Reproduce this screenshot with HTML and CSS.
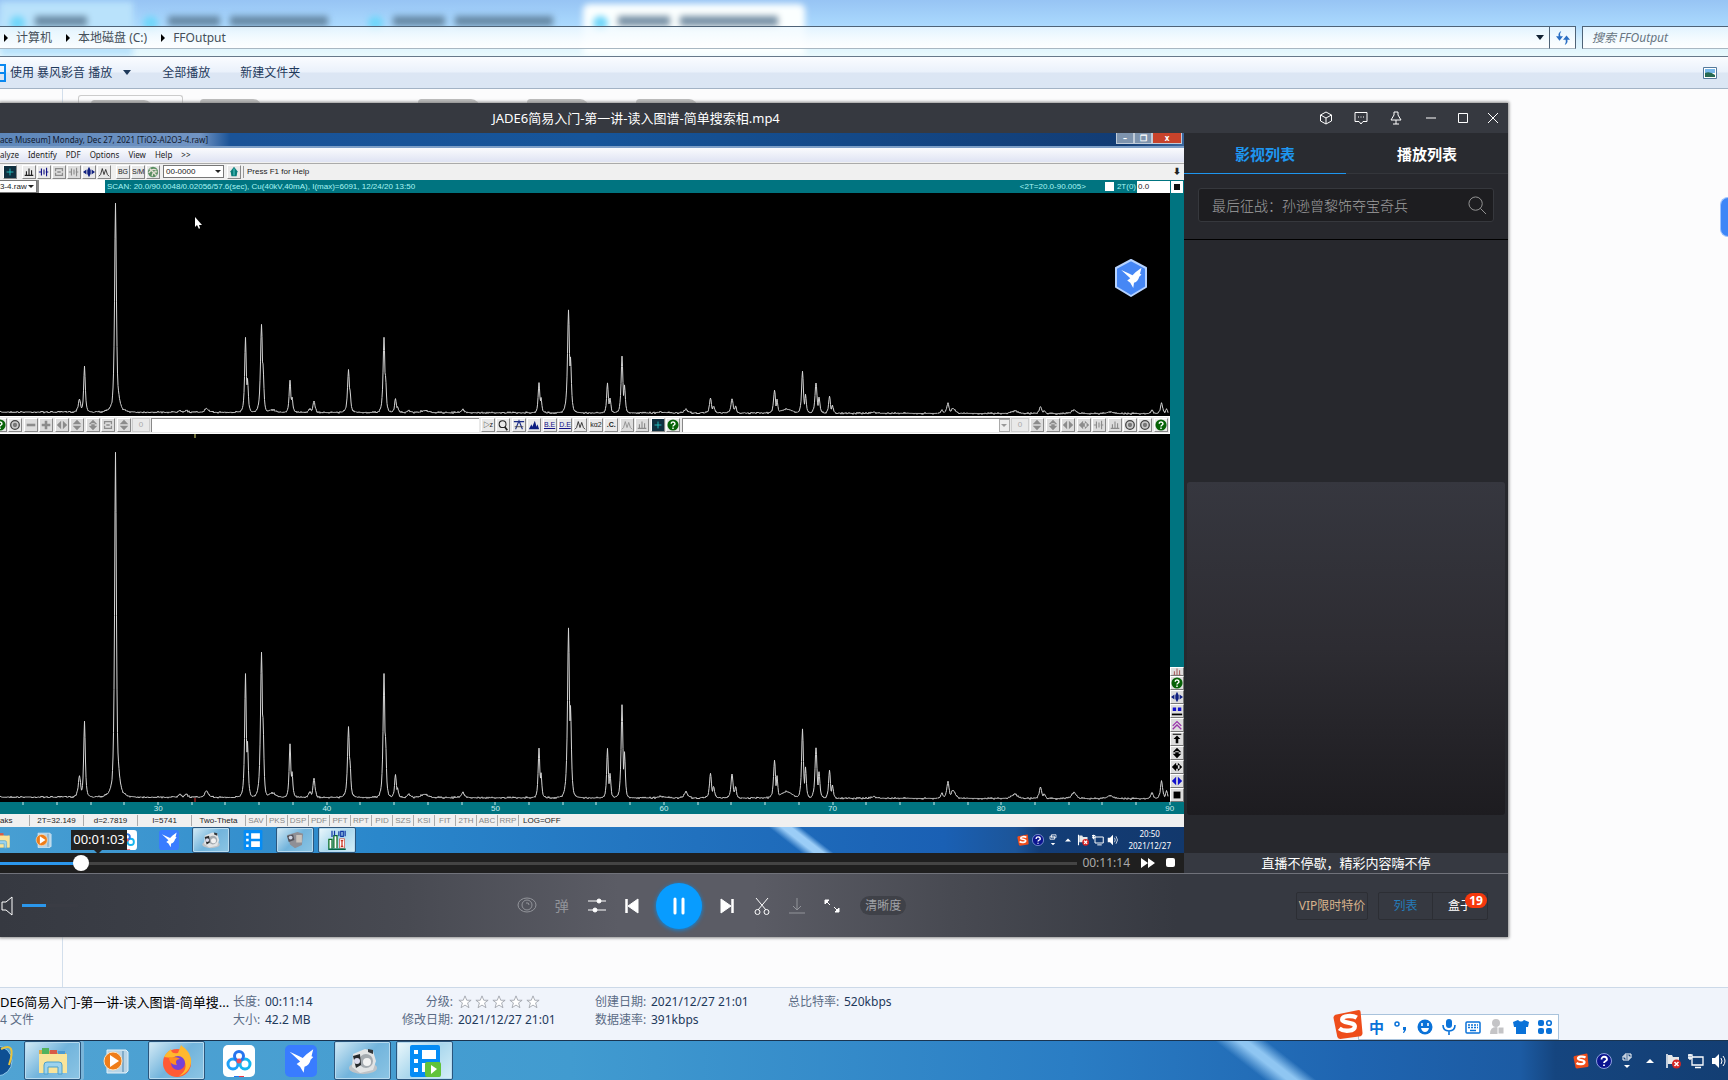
FILE: index.html
```html
<!DOCTYPE html>
<html lang="zh-CN">
<head>
<meta charset="utf-8">
<title>JADE6简易入门-第一讲-读入图谱-简单搜索相.mp4</title>
<link rel="stylesheet" href="styles.css">
</head>
<body>
<svg class="defs" aria-hidden="true">
  <symbol id="i-bird" viewBox="0 0 32 32"><path fill="#fff" d="M3 6l11 5 4 2 4-4 8-6-2 8 2 1-3 3c-1 4-3 7-7 8l-1 7-4-7-4-3 4-3z"/></symbol>
  <symbol id="i-help" viewBox="0 0 14 14"><circle cx="7" cy="7" r="6.500" fill="#076307"/><path d="M5 5.500c0-3 4.300-2.600 4.300 0C9.300 7 7 7 7 8.700M7 10v1.600" stroke="#fff" stroke-width="1.700" fill="none"/></symbol>
  <symbol id="i-bars" viewBox="0 0 14 14"><path d="M2 11h10M4 11V6M7 11V3M10 11V5" stroke="currentColor" stroke-width="1.300" fill="none"/></symbol>
  <symbol id="i-wave" viewBox="0 0 14 14"><path d="M1 12l2-2 2-7 2 7 2-6 2 6 2 2" stroke="currentColor" fill="none"/></symbol>
  <symbol id="i-link" viewBox="0 0 14 14"><path d="M1 7h3V3M4 7v4M7 7V4m0 3v3M9 7h3M10 2v10" stroke="currentColor" stroke-width="1.300" fill="none"/></symbol>
  <symbol id="i-minus" viewBox="0 0 14 14"><path d="M2 7h10" stroke="currentColor" stroke-width="3"/></symbol>
  <symbol id="i-plus" viewBox="0 0 14 14"><path d="M2 7h10M7 2v10" stroke="currentColor" stroke-width="3"/></symbol>
  <symbol id="i-lr" viewBox="0 0 14 14"><path d="M6 2v10L1 7zM8 2v10l5-5z" fill="currentColor"/></symbol>
  <symbol id="i-lrj" viewBox="0 0 14 14"><path d="M6 2v10L1 7zM8 2v10l5-5zM4 5h6v4H4z" fill="currentColor"/></symbol>
  <symbol id="i-ud" viewBox="0 0 14 14"><path d="M2 6h10L7 1zM2 8h10l-5 5z" fill="currentColor"/></symbol>
  <symbol id="i-udj" viewBox="0 0 14 14"><path d="M2 6h10L7 1zM2 8h10l-5 5zM5 5h4v5H5z" fill="currentColor"/></symbol>
  <symbol id="i-cycle" viewBox="0 0 14 14"><path d="M3 6V3h8v3M11 8v3H3V8M5 7h4" stroke="currentColor" stroke-width="1.500" fill="none"/></symbol>
  <symbol id="i-ring" viewBox="0 0 14 14"><circle cx="7" cy="7" r="5" fill="#ccc" stroke="#444" stroke-width="1.500"/><circle cx="7" cy="7" r="2.500" fill="#777"/></symbol>
  <symbol id="i-cross" viewBox="0 0 14 14"><path d="M7 1l2 4v4l-2 4-2-4V5zM0 7l4-3v6zM14 7l-4-3v6z" fill="#102080"/></symbol>
  <symbol id="i-screen" viewBox="0 0 14 14"><path fill="#103040" d="M0 0h14v14H0z"/><path d="M3 7h8M7 3v8" stroke="#2cc" fill="none"/></symbol>
  <symbol id="i-globe" viewBox="0 0 14 14"><circle cx="7" cy="7" r="6" fill="#5b8f62"/><path d="M3 3l8 8M2 8c3-4 6-5 9-3M6 12c0-4 3-6 6-5" stroke="#e5e0d5" fill="none" stroke-width="1.500"/></symbol>
  <symbol id="i-drop" viewBox="0 0 14 14"><path d="M7 1l4 5-1 6H4L3 6z" fill="#087b78"/><path d="M7 3v8" stroke="#6dd"/></symbol>
  <symbol id="i-peak" viewBox="0 0 14 14"><path d="M1 12l3-6 1 3 3-7 2 7 1-3 2 6z" fill="#0a1c80"/></symbol>
  <symbol id="i-fit" viewBox="0 0 14 14"><path d="M1 3h12M3 12L7 2l4 10" stroke="#1b2c88" fill="none" stroke-width="1.300"/><path d="M2 9h10" stroke="#444"/></symbol>
  <symbol id="i-lens" viewBox="0 0 14 14"><circle cx="6.500" cy="6" r="4" fill="none" stroke="#222" stroke-width="1.200"/><path d="M9 9l3 4" stroke="#222" stroke-width="2"/></symbol>
  <symbol id="i-sogou" viewBox="0 0 32 32"><path d="M3 6l24-5q2 0 2 2l2 22q0 2-2 3L8 31q-2 0-3-2L1 9q0-2 2-3z" fill="#ee4d1b"/><path d="M25 9c-5-3-15-2-15 2s13 2 13 7-11 6-16 2" stroke="#fff" stroke-width="4.500" fill="none"/></symbol>
  <symbol id="i-folder" viewBox="0 0 32 32"><path d="M2 5h10l2 3h15v20H2z" fill="#dca94b"/><path d="M5 3h7v6H5z" fill="#51b35d"/><path d="M13 5h7v4h-7z" fill="#d75a47"/><path d="M21 6h7v4h-7z" fill="#4c9ad1"/><path d="M2 9h28v19H2z" fill="#f9e49a"/><path d="M7 29v-9q0-3 3-3h12q3 0 3 3v9h-4v-7H11v7z" fill="#9bd2ee" stroke="#4ba0cc"/></symbol>
  <symbol id="i-wmp" viewBox="0 0 32 32"><path d="M8 5h19l2 2v19l-2 2H8z" fill="#b8d4e6" stroke="#e2f1fa"/><path d="M24 6v21" stroke="#4a83ac"/><circle cx="14" cy="16" r="9" fill="#ef7d19" stroke="#ffe2ba"/><path d="M11 10l9 6-9 6z" fill="#fff"/></symbol>
  <symbol id="i-firefox" viewBox="0 0 32 32"><circle cx="16" cy="18" r="14" fill="#ff5a35"/><path d="M3 12c2-4 5-6 7-8 0 4 3 5 7 4l3-8c4 4 8 5 10 14 1 6-3 15-12 17 7-4 8-11 5-16-3-4-9-4-12-2z" fill="#ffb82e"/><circle cx="17" cy="18" r="7" fill="#7542d8"/><path d="M8 12c4 1 7-1 11 2-4 0-5 3-3 6-5 0-8-3-8-8z" fill="#ff8f20"/></symbol>
  <symbol id="i-cloud" viewBox="0 0 32 32"><rect width="32" height="32" rx="5" fill="#fff"/><g fill="none" stroke-width="3"><circle cx="10" cy="19" r="5" stroke="#20a0f8"/><circle cx="22" cy="19" r="5" stroke="#17b5ee"/><circle cx="16" cy="11" r="4.500" stroke="#2775ee"/></g><circle cx="16" cy="16" r="2.500" fill="#f04d5a"/><path d="M11 31h5v1h-5z" fill="#27e"/><path d="M16 31h5v1h-5z" fill="#e34"/></symbol>
  <symbol id="i-birdbox" viewBox="0 0 32 32"><rect width="32" height="32" rx="5" fill="#397cff"/><use href="#i-bird" x="2" y="1" width="28" height="29"/></symbol>
  <symbol id="i-camera" viewBox="0 0 32 32"><ellipse cx="16" cy="23" rx="14" ry="6" fill="#bfc3c7"/><path d="M6 9l12-5 8 2 3 10-3 9-13 3-8-6z" fill="#e2e4e5"/><circle cx="19" cy="16" r="7" fill="#a5abb0"/><circle cx="20" cy="17" r="4" fill="#f2f2f2"/><path d="M6 11l7-2 1 11-5 3z" fill="#26292c"/><circle cx="10" cy="16" r="3" fill="#dde"/><path d="M21 4l5 1v4l-5-2z" fill="#33373b"/></symbol>
  <symbol id="i-list" viewBox="0 0 32 32"><rect x="1" width="30" height="32" rx="2" fill="#058cf5"/><path fill="#fff" d="M5 5h4v4H5zM5 14h4v4H5zM5 23h4v4H5zM13 5h14v9H13zM13 18h14v9H13z"/></symbol>
  <symbol id="i-listplay" viewBox="0 0 32 32"><use href="#i-list"/><rect x="16" y="17" width="16" height="15" rx="2" fill="#61c33a"/><path d="M22 20l6 4-6 5z" fill="#fff"/></symbol>
  <symbol id="i-camcorder" viewBox="0 0 32 32"><path d="M4 8l16-5 9 3-2 18-11 5-8-6z" fill="#8f8f95"/><path d="M3 9l10-2 2 9-9 3z" fill="#54545c"/><path d="M18 8h9v12h-9z" fill="#c9c2bb"/><circle cx="9" cy="12" r="3" fill="#ccd4e5"/></symbol>
  <symbol id="i-jade" viewBox="0 0 32 32"><path d="M3 30V15h5v15M11 29V9h5v20" stroke="#076b20" stroke-width="2" fill="#fff"/><path d="M8 1v10M12 1v8M19 2v8M22 2h4v8h-4zM29 1v9" stroke="#123aa4" stroke-width="2" fill="none"/><path d="M20 14h8v15h-8z" fill="#fff" stroke="#c32"/><path d="M22 17h4M24 17v9M22 26h4" stroke="#c32" stroke-width="2"/><path d="M2 31h28" stroke="#064" stroke-width="3"/></symbol>
  <symbol id="i-q" viewBox="0 0 16 16"><circle cx="8" cy="8" r="7.500" fill="#0b1590" stroke="#8fa1dd"/><path d="M5.500 6.500c0-4 5.500-3.300 5.500 0C11 8 8 8 8 10M8 11.500v1.500" stroke="#fff" stroke-width="1.800" fill="none"/></symbol>
  <symbol id="i-restore" viewBox="0 0 16 16"><path d="M6 1h6v4H6zM4 3h6v4H4z" stroke="#fff" fill="none"/><path d="M5 12h6l-3 3z" fill="#fff"/></symbol>
  <symbol id="i-up" viewBox="0 0 16 16"><path d="M4 10h8L8 6z" fill="#fff"/></symbol>
  <symbol id="i-flag" viewBox="0 0 16 16"><path d="M2 1v14" stroke="#fff" stroke-width="1.500"/><path d="M3 2h4l1 2h6v7H3z" fill="#e8e8e8"/><circle cx="11.500" cy="11" r="4.500" fill="#d32525"/><path d="M9.500 9l4 4M13.500 9l-4 4" stroke="#fff" stroke-width="1.500"/></symbol>
  <symbol id="i-net" viewBox="0 0 16 16"><path d="M4 4h11v8H4zM7 14.500h6M2 1v6M0 2h4v3H0z" stroke="#fff" stroke-width="1.300" fill="none"/></symbol>
  <symbol id="i-sound" viewBox="0 0 16 16"><path d="M1 5h3l4-4v14l-4-4H1z" fill="#fff"/><path d="M10 5q2 3 0 6M12 3q4 5 0 10" stroke="#fff" fill="none"/></symbol>
  <symbol id="i-star" viewBox="0 0 16 16"><path d="M8 1l2 5h5l-4 3 1.500 5.500L8 11.500l-4.500 3L5 9 1 6h5z" fill="#fff" stroke="#9fa4ac"/></symbol>
</svg>

<div class="desktop">
  <header class="glass">
    <div class="ghost-tabs" aria-hidden="true">
      <div class="ghost first"><b></b><i></i></div>
      <div class="ghost"><b></b><i></i><i class="long"></i></div>
      <div class="ghost"><b></b><i></i><i class="long"></i></div>
      <div class="ghost on"><b></b><i></i><i class="long"></i></div>
    </div>
    <div class="address-row">
      <nav class="address">
        <span class="tri"></span><a href="#">计算机</a>
        <span class="tri"></span><a href="#">本地磁盘 (C:)</a>
        <span class="tri"></span><a href="#">FFOutput</a>
        <span class="caret"></span>
      </nav>
      <button class="refresh" aria-label="刷新"><svg viewBox="0 0 16 16"><path d="M6 0Q2 2 3 6H0l4 5 4-5H5Q4 3 6 0zM10 16q4-2 3-6h3l-4-5-4 5h3q1 3-1 6z" fill="#2a6fc4"/></svg></button>
      <input class="finder" type="text" placeholder="搜索 FFOutput" aria-label="搜索 FFOutput">
    </div>
  </header>

  <div class="commands">
    <button class="play-with"><svg viewBox="0 0 6 18"><path d="M-8 1H5v16H-8M-8 9H5" stroke="#0a88f0" stroke-width="2" fill="none"/></svg>使用 暴风影音 播放<span class="caret"></span></button>
    <button>全部播放</button>
    <button>新建文件夹</button>
    <svg class="view-icon" viewBox="0 0 14 12"><path d="M.5.500h13v11H.5z" fill="#fff" stroke="#557a9c"/><path d="M2 2h10v4H2z" fill="#78b8ea"/><path d="M2 6q5-2 10 2v2H2z" fill="#276a52"/></svg>
  </div>

  <main class="files">
    <div class="tree"></div>
    <div class="thumbs"><span class="pick"><i></i></span><i></i><i class="far"></i><i></i><i class="near"></i></div>

    <section class="player">
      <div class="titlebar">
        <h1>JADE6简易入门-第一讲-读入图谱-简单搜索相.mp4</h1>
        <div class="winbtns">
          <button aria-label="皮肤"><svg viewBox="0 0 14 14"><path d="M7 1l5.500 3v6L7 13 1.500 10V4zM1.500 4L7 7l5.500-3M7 7v6" /></svg></button>
          <button aria-label="反馈"><svg viewBox="0 0 14 14"><path d="M1 1.500h12v9H9L7 13l-2-2.500H1zM4 6h1M6.500 6h1M9 6h1"/></svg></button>
          <button aria-label="置顶"><svg viewBox="0 0 14 14"><path d="M5 1h4v3l3 5H2l3-5zM7 9v4M4 13h6"/></svg></button>
          <button aria-label="最小化"><svg viewBox="0 0 14 14"><path d="M2 7h10"/></svg></button>
          <button class="slim" aria-label="最大化"><svg viewBox="0 0 14 14"><path d="M2.500 2.500h9v9h-9z"/></svg></button>
          <button class="slim" aria-label="关闭"><svg viewBox="0 0 14 14"><path d="M2 2l10 10M12 2L2 12"/></svg></button>
        </div>
      </div>

      <div class="stage">
        <div class="screen">
          <div class="jade-title"><span>ace Museum] Monday, Dec 27, 2021 [TiO2-Al2O3-4.raw]</span><div class="jade-win"><b>–</b><b>❐</b><b class="x">x</b></div></div>
          <div class="jade-menu"><span>alyze</span><span>Identify</span><span>PDF</span><span>Options</span><span>View</span><span>Help</span><span>&gt;&gt;</span></div>
          <div class="jade-tools">
            <svg class="t"><use href="#i-screen"/></svg>
            <svg class="t gap"><use href="#i-bars"/></svg><svg class="t navy"><use href="#i-link"/></svg><svg class="t dim"><use href="#i-cycle"/></svg><svg class="t dim"><use href="#i-link"/></svg><svg class="t"><use href="#i-cross"/></svg><svg class="t"><use href="#i-wave"/></svg>
            <span class="t txt gap">BG</span><span class="t txt">S/M</span><svg class="t"><use href="#i-globe"/></svg>
            <span class="code">00-0000<span class="caret"></span></span>
            <svg class="t"><use href="#i-drop"/></svg>
            <span class="tip">Press F1 for Help</span><span class="pin">⬇</span>
          </div>
          <div class="jade-scan">
            <span class="raw">3-4.raw<span class="caret"></span></span><span class="blank"></span>
            <span class="info">SCAN: 20.0/90.0048/0.02056/57.6(sec), Cu(40kV,40mA), I(max)=6091, 12/24/20 13:50</span>
            <span>&lt;2T=20.0-90.005&gt;</span><label><input type="checkbox">2T(0)</label><span class="zero">0.0</span><span class="stop"></span>
          </div>
          <div class="jade-body">
            <div class="plots">
              <svg class="plot top" viewBox="0 0 1170 223" preserveAspectRatio="none"><path class="trace" data-base="219" data-scale="1"/></svg>
              <div class="jade-mid">
                <svg class="t"><use href="#i-help"/></svg><svg class="t"><use href="#i-ring"/></svg><svg class="t dim"><use href="#i-minus"/></svg><svg class="t dim"><use href="#i-plus"/></svg><svg class="t dim"><use href="#i-lr"/></svg><svg class="t dim"><use href="#i-ud"/></svg><svg class="t dim"><use href="#i-udj"/></svg><svg class="t dim"><use href="#i-cycle"/></svg><svg class="t dim"><use href="#i-ud"/></svg><span class="num">0</span>
                <span class="field"></span>
                <span class="t txt">▷z</span><svg class="t"><use href="#i-lens"/></svg><svg class="t"><use href="#i-fit"/></svg><svg class="t"><use href="#i-peak"/></svg><span class="t txt u">B.E</span><span class="t txt u">D.E</span><svg class="t"><use href="#i-wave"/></svg><span class="t txt">kα2</span><span class="t txt strong">.C.</span><svg class="t dim"><use href="#i-wave"/></svg><svg class="t dim"><use href="#i-bars"/></svg><svg class="t"><use href="#i-screen"/></svg><svg class="t"><use href="#i-help"/></svg>
                <span class="field"><span class="drop"><span class="caret"></span></span></span>
                <span class="num">0</span><svg class="t dim"><use href="#i-ud"/></svg><svg class="t dim"><use href="#i-udj"/></svg><svg class="t dim"><use href="#i-lr"/></svg><svg class="t dim"><use href="#i-lrj"/></svg><svg class="t dim"><use href="#i-link"/></svg><svg class="t dim"><use href="#i-bars"/></svg><svg class="t"><use href="#i-ring"/></svg><svg class="t"><use href="#i-ring"/></svg><svg class="t"><use href="#i-help"/></svg>
              </div>
              <svg class="plot low" viewBox="0 0 1170 368" preserveAspectRatio="none"><path class="trace" data-base="363" data-scale="1.65"/><path d="M195 0v4" stroke="#dede70"/><path d="M195 364v4" stroke="#d33"/></svg>
            </div>
            <div class="rail">
              <span class="rt half"><svg><use href="#i-bars"/></svg></span><span class="rt"><svg><use href="#i-help"/></svg></span><span class="rt"><svg><use href="#i-cross"/></svg></span><span class="rt"><svg viewBox="0 0 14 14"><path d="M2 3h4v4H2zM8 3h4v4H8z" fill="#11c"/><path d="M1 10h12v2H1z"/></svg></span><span class="rt violet"><svg viewBox="0 0 14 14"><path d="M2 8l5-5 5 5M2 12l5-5 5 5" stroke="currentColor" stroke-width="1.500" fill="none"/></svg></span><span class="rt"><svg viewBox="0 0 14 14"><path d="M2 1h10v1H2zM7 3l4 4H8.500v5h-3V7H3z"/></svg></span><span class="rt"><svg><use href="#i-udj"/></svg></span><span class="rt"><svg><use href="#i-lrj"/></svg></span><span class="rt blue"><svg><use href="#i-lr"/></svg></span><span class="rt"><svg viewBox="0 0 14 14"><path d="M3 3h8v8H3z"/></svg></span>
            </div>
          </div>
          <div class="axis">
            <svg class="ticks" viewBox="0 0 1184 3" preserveAspectRatio="none"><path/></svg>
            <div class="marks"><span>30</span><span>40</span><span>50</span><span>60</span><span>70</span><span>80</span><span>90</span></div>
          </div>
          <div class="jade-status">
            <span class="w30">aks</span><span class="w54">2T=32.149</span><span class="w54">d=2.7819</span><span class="w54">I=5741</span><span class="w54">Two-Theta</span><em>SAV</em><em>PKS</em><em>DSP</em><em>PDF</em><em>PFT</em><em>RPT</em><em>PID</em><em>SZS</em><em>KSI</em><em>FIT</em><em>2TH</em><em>ABC</em><em>RRP</em><span>LOG=OFF</span>
          </div>
          <div class="mini-task">
            <span class="slot"><svg><use href="#i-folder"/></svg></span><span class="slot"><svg><use href="#i-wmp"/></svg></span><span class="slot"><svg><use href="#i-firefox"/></svg></span><span class="slot"><svg><use href="#i-cloud"/></svg></span><span class="slot"><svg><use href="#i-birdbox"/></svg></span><span class="slot open"><svg><use href="#i-camera"/></svg></span><span class="slot"><svg><use href="#i-list"/></svg></span><span class="slot open"><svg><use href="#i-camcorder"/></svg></span><span class="slot open now"><svg><use href="#i-jade"/></svg></span>
            <div class="mini-tray"><svg><use href="#i-sogou"/></svg><svg><use href="#i-q"/></svg><svg><use href="#i-restore"/></svg><svg><use href="#i-up"/></svg><svg><use href="#i-flag"/></svg><svg><use href="#i-net"/></svg><svg><use href="#i-sound"/></svg><span class="clock">20:50<br>2021/12/27</span></div>
          </div>

          <svg class="cursor" viewBox="0 0 9 14"><path d="M1 1v10l2-2 2 4 1-1-1-3h3z" fill="#fff"/></svg>
          <svg class="hexbird" viewBox="0 0 34 38"><path d="M17 1l15 8v19l-15 9-15-9V9z" fill="#4687f5" stroke="#b5d2ff" stroke-width="2" stroke-linejoin="round"/><use href="#i-bird" x="5" y="6" width="24" height="25"/></svg>
          <div class="time-tip">00:01:03</div>
        </div>

        <div class="seekbar">
          <input class="seek" type="range" min="0" max="1000" value="69" aria-label="播放进度">
          <span class="total">00:11:14</span>
          <button aria-label="快进"><svg viewBox="0 0 14 12"><path d="M0 1l7 5-7 5zM7 1l7 5-7 5z"/></svg></button>
          <button aria-label="停止"><svg viewBox="0 0 14 12"><rect x="2" y="1" width="9" height="9" rx="2"/></svg></button>
        </div>
      </div>

      <aside class="side">
        <div class="tabs"><button class="on">影视列表</button><button>播放列表</button></div>
        <div class="searchwrap"><label class="search"><input type="text" placeholder="最后征战：孙逊曾黎饰夺宝奇兵" aria-label="搜索影片"><svg viewBox="0 0 20 20"><circle cx="8" cy="8" r="7"/><path d="M13 13l6 6"/></svg></label></div>
        <div class="shelf"><div class="panel"></div></div>
        <p class="slogan">直播不停歇，精彩内容嗨不停</p>
      </aside>

      <div class="controls">
        <div class="volume"><svg viewBox="0 0 14 20"><path d="M2 6h4l6-5v18l-6-5H2z"/></svg><input type="range" min="0" max="100" value="42" aria-label="音量"></div>
        <div class="transport">
          <button class="faint" aria-label="护眼"><svg viewBox="0 0 20 20"><ellipse cx="10" cy="9" rx="9" ry="7"/><circle cx="10" cy="9" r="5"/><path d="M9 7q3-1 3 2"/></svg></button>
          <button class="faint dan">弹</button>
          <button aria-label="设置"><svg viewBox="0 0 20 20"><path d="M1 5h18M1 14h18"/><circle cx="12" cy="5" r="2" class="f"/><circle cx="8" cy="14" r="2" class="f"/></svg></button>
          <button aria-label="上一个"><svg viewBox="0 0 20 20"><path class="f" d="M16 3v14L6 10z"/><path d="M4.500 3v14" stroke-width="2.500"/></svg></button>
          <button class="pause" aria-label="暂停"><svg viewBox="0 0 20 20"><path d="M6 3v14M14 3v14"/></svg></button>
          <button aria-label="下一个"><svg viewBox="0 0 20 20"><path class="f" d="M4 3v14l10-7z"/><path d="M15.500 3v14" stroke-width="2.500"/></svg></button>
          <button aria-label="截取"><svg viewBox="0 0 20 20"><path d="M4 2l10 12M16 2L6 14"/><circle cx="5.500" cy="16" r="2.500"/><circle cx="14.500" cy="16" r="2.500"/></svg></button>
          <button class="faint" aria-label="下载"><svg viewBox="0 0 20 20"><path d="M10 2v12M6 10l4 4 4-4M2 17h16"/></svg></button>
          <button aria-label="全屏"><svg viewBox="0 0 20 20"><path class="f" d="M3 4h4L3 8zM17 16h-4l4-4z"/><path d="M4 5l4 4M16 15l-4-4"/></svg></button>
          <button class="clarity">清晰度</button>
        </div>
        <div class="extras"><button class="vip">VIP限时特价</button><div class="pair"><button class="blue">列表</button><button class="box">盒子<b>19</b></button></div></div>
      </div>
    </section>
    <div class="floater"></div>
  </main>

  <footer class="details">
    <strong class="name">DE6简易入门-第一讲-读入图谱-简单搜...</strong><span>长度:</span><b>00:11:14</b><span class="r">分级:</span><b class="stars"><svg><use href="#i-star"/></svg><svg><use href="#i-star"/></svg><svg><use href="#i-star"/></svg><svg><use href="#i-star"/></svg><svg><use href="#i-star"/></svg></b><span>创建日期:</span><b>2021/12/27 21:01</b><span>总比特率:</span><b>520kbps</b>
    <span>4 文件</span><span>大小:</span><b>42.2 MB</b><span class="r">修改日期:</span><b>2021/12/27 21:01</b><span>数据速率:</span><b>391kbps</b>
    <div class="ime">
      <svg class="logo"><use href="#i-sogou"/></svg>
      <span>中</span>
      <svg viewBox="0 0 16 16"><circle cx="4" cy="5" r="2" fill="none" stroke="currentColor" stroke-width="1.500"/><path d="M10 8h3v3l-2 3h-1l1-3h-1z"/></svg>
      <svg viewBox="0 0 16 16"><circle cx="8" cy="8" r="7.500"/><path d="M5 4v3M11 4v3" stroke="#fff" stroke-width="1.600"/><path d="M4 9h8q-1 4-4 4t-4-4z" fill="#fff"/></svg>
      <svg viewBox="0 0 16 16"><rect x="5" y="0" width="6" height="9" rx="3"/><path d="M2 6q0 6 6 6t6-6M8 12v4" stroke="currentColor" stroke-width="1.600" fill="none"/></svg>
      <svg viewBox="0 0 16 16"><rect x="1" y="3" width="14" height="11" rx="1" fill="none" stroke="currentColor" stroke-width="1.500"/><path d="M3 6h10M3 8.500h10" stroke="currentColor" stroke-width="1.500" stroke-dasharray="2 1"/><path d="M5 11.500h6" stroke="currentColor" stroke-width="1.500"/></svg>
      <svg class="grey" viewBox="0 0 16 16"><circle cx="7" cy="4" r="4"/><path d="M1 15q0-7 6-7t6 7z"/><path d="M9 8h6v7H9z" stroke="#fff"/></svg>
      <svg viewBox="0 0 16 16"><path d="M0 3l5-2q3 3 6 0l5 2-1 5h-2v7H3V8H1z"/></svg>
      <svg viewBox="0 0 16 16"><rect x="1" y="1" width="6" height="6" rx="2"/><rect x="1" y="9" width="6" height="6" rx="2"/><rect x="9" y="9" width="6" height="6" rx="2"/><circle cx="12" cy="4" r="2.300" fill="none" stroke="currentColor" stroke-width="1.600"/></svg>
    </div>
  </footer>

  <nav class="taskbar">
    <svg class="orb" viewBox="0 0 9 32"><circle cx="-8" cy="16" r="15" fill="#0e4f93" stroke="#91c9ec"/><path d="M-4 4q8-4 10 0t-2 16" stroke="#e8c33c" stroke-width="2" fill="none"/></svg>
    <button class="slot open stack" aria-label="资源管理器"><svg><use href="#i-folder"/></svg></button>
    <button class="slot" aria-label="媒体播放器"><svg><use href="#i-wmp"/></svg></button>
    <button class="slot open" aria-label="Firefox"><svg><use href="#i-firefox"/></svg></button>
    <button class="slot" aria-label="网盘"><svg><use href="#i-cloud"/></svg></button>
    <button class="slot" aria-label="飞鸟"><svg><use href="#i-birdbox"/></svg></button>
    <button class="slot open" aria-label="相机"><svg><use href="#i-camera"/></svg></button>
    <button class="slot open now" aria-label="暴风影音"><svg><use href="#i-listplay"/></svg></button>
    <div class="tray"><svg><use href="#i-sogou"/></svg><svg><use href="#i-q"/></svg><svg><use href="#i-restore"/></svg><svg><use href="#i-up"/></svg><svg><use href="#i-flag"/></svg><svg><use href="#i-net"/></svg><svg><use href="#i-sound"/></svg></div>
  </nav>
</div>
<script src="plot.js"></script>
</body>
</html>
```
FILE: styles.css
```css
* { box-sizing: border-box; }
body { margin: 0; font: 12px/18px "Noto Sans", "Noto Sans CJK SC", sans-serif; color: #1e395b; overflow: hidden; }
button { font: inherit; color: inherit; background: none; border: 0; padding: 0; display: flex; align-items: center; justify-content: center; white-space: nowrap; }
a { color: inherit; text-decoration: none; }
h1, p { margin: 0; font-weight: 400; }
svg { display: block; flex: none; }
.defs { position: absolute; width: 0; height: 0; }
.caret { border: 4px solid transparent; border-top: 5px solid currentColor; border-bottom: 0; }
.desktop { display: flex; flex-direction: column; height: 100vh; }

/* explorer frame */
.glass { position: relative; height: 56px; padding-top: 26px; background: linear-gradient(180deg, #97c4f4, #a9d8fd 24px, #d6effd 40px, #eafafd); overflow: hidden; }
.ghost-tabs { position: absolute; inset: 0; display: flex; filter: blur(3px); }
.ghost { flex: 0 0 225px; display: flex; gap: 10px; padding: 14px 0 0 10px; margin-top: 2px; }
.ghost.first { flex-basis: 133px; background: #b9e2fb; }
.ghost.on { background: #fbffff; border-radius: 6px 6px 0 0; flex-basis: 222px; margin-top: 4px; padding-top: 12px; }
.ghost b { width: 15px; height: 14px; background: #6fd6fa; border-radius: 8px; }
.ghost i { width: 52px; height: 10px; background: #55748f; opacity: .8; }
.ghost i.long { width: 98px; }
.address-row { position: relative; display: flex; height: 23px; }
.address, .refresh, .finder { border: 1px solid #4e6377; border-bottom-color: #a8b7c2; background: linear-gradient(180deg, #eef9ffcc, #ffffffee); }
.address { flex: 1; display: flex; align-items: center; padding-left: 4px; border-left: 0; color: #454f59; }
.address .tri { border: 4px solid transparent; border-left: 4px solid #000; border-right: 0; margin-right: 8px; }
.address a { margin-right: 14px; }
.address .caret { margin: 0 5px 0 auto; color: #123; }
.refresh { width: 26px; border-left: 0; }
.refresh svg { width: 14px; height: 14px; }
.finder { width: 146px; margin-left: 6px; padding: 0 9px; font: italic 12px "Noto Sans", "Noto Sans CJK SC", sans-serif; border-right: 0; border-radius: 0; }
.finder::placeholder { color: #687582; opacity: 1; }
.commands { height: 33px; display: flex; align-items: center; gap: 30px; border-top: 1px solid #67788a; border-bottom: 1px solid #a3b3c5; background: linear-gradient(180deg, #fafcff, #eaf1fb 15px, #dce6f4 16px, #dbe6f4); }
.play-with svg { width: 6px; height: 18px; margin-right: 4px; }
.play-with .caret { margin: 0 1px 0 11px; }
.view-icon { width: 14px; height: 12px; margin: 0 11px 0 auto; }
.files { flex: 1; position: relative; display: flex; background: #fcfcfd; }
.tree { width: 63px; border-right: 1px solid #d3dfec; }
.thumbs { display: flex; align-items: flex-start; padding: 6px 0 0 15px; }
.thumbs i { width: 62px; height: 9px; margin-top: 4px; background: #bdbdbd; border-radius: 4px 10px 0 0; }
.thumbs .pick { width: 105px; height: 10px; padding-left: 12px; margin-right: 17px; border: 1px solid #ccc; border-bottom: 0; border-radius: 3px 3px 0 0; }
.thumbs .pick i { display: block; }
.thumbs .far { margin-left: 156px; }
.thumbs .far + i, .thumbs .near { margin-left: 47px; }
.floater { position: absolute; right: 0; top: 108px; width: 8px; height: 40px; background: #3e86f7; border: 1px solid #9cc3ff; border-right: 0; border-radius: 8px 0 0 8px; }

/* player window */
.player { position: absolute; left: 0; right: 220px; top: 14px; bottom: 50px; display: grid; grid-template: 30px 1fr 64px / 1fr 324px; background: #363941; box-shadow: 0 0 3px 1px #888; }
.titlebar { grid-column: 1 / 3; display: flex; align-items: center; background: #363940; color: #fff; }
.titlebar h1 { flex: 1; text-align: center; font-size: 13px; }
.winbtns { display: flex; padding-left: 36px; }
.winbtns button { width: 35px; height: 30px; }
.winbtns .slim { width: 30px; }
.winbtns svg { width: 14px; height: 14px; fill: none; stroke: #fff; }
.stage { display: flex; flex-direction: column; min-width: 0; }
.screen { position: relative; flex: 1; display: flex; flex-direction: column; overflow: hidden; background: #f0f0f0; color: #222; font: 8px/12px "Liberation Sans", sans-serif; white-space: nowrap; }
.jade-title { height: 15px; display: flex; align-items: center; justify-content: space-between; background: linear-gradient(90deg, #5d87ba, #7194c3 200px, #1a5397 230px, #16559a 50%, #123c74 95%, #3a669d); border-bottom: 2px solid #7d9fc7; color: #10182c; font: 8px/12px "Noto Sans", sans-serif; }
.jade-win { display: flex; align-self: flex-start; margin-right: 2px; color: #fff; }
.jade-win b { width: 18px; height: 11px; line-height: 10px; text-align: center; background: #7e94ae; border: 1px solid #c0cbd8; border-top: 0; }
.jade-win .x { width: 30px; background: #c8432b; }
.jade-menu { height: 14px; display: flex; align-items: center; gap: 9px; background: linear-gradient(180deg, #fafbfd, #dfe3f3); font: 8px/14px "Noto Sans", sans-serif; margin-bottom: 1px; }
.jade-tools { height: 17px; display: flex; align-items: center; gap: 1px; padding: 0 0 1px 3px; border-top: 1px solid #aaa; }
.t { width: 14px; height: 14px; padding: 0; color: #222; background: #e9e9e9; border: 1px solid #fff; border-right-color: #888; border-bottom-color: #888; text-align: center; flex: none; }
.t.gap { margin-left: 4px; }
.dim { color: #8c8c8c; background: #ddd; }
.navy { color: #118; }
.txt { font-size: 7px; line-height: 11px; }
.u { text-decoration: underline; color: #118; }
.strong { font-weight: 700; }
.code, .raw { display: flex; align-items: center; justify-content: space-between; background: #fff; border: 1px solid #777; width: 61px; height: 13px; padding: 0 2px; margin: 0 2px; }
.tip { flex: 1; border-left: 1px solid #999; margin-left: 1px; padding-left: 3px; }
.pin { width: 14px; text-align: center; }
.jade-scan { height: 13px; display: flex; align-items: center; background: #007480; color: #a7f4f4; }
.raw { width: 37px; margin: 0; padding: 0 2px 0 0; color: #222; border-left: 0; }
.blank { width: 68px; height: 13px; background: #fff; border-left: 2px solid #888; }
.info { flex: 1; padding-left: 2px; }
.jade-scan label { display: flex; align-items: center; gap: 3px; margin: 0 1px 0 19px; }
.jade-scan input { appearance: none; width: 9px; height: 9px; margin: 0; background: #fff; }
.zero { width: 33px; height: 12px; background: #fff; color: #222; padding-left: 1px; }
.stop { width: 12px; height: 12px; margin: 0 1px; background: #111; border: 3px solid #fff; }
.jade-body { flex: 1; display: flex; min-height: 0; background: #007480; }
.plots { flex: 1; min-width: 0; display: flex; flex-direction: column; }
.plot { width: 100%; min-height: 0; background: #000; fill: none; }
.plot.top { flex: 223 1 0; }
.plot.low { flex: 368 1 0; }
.trace { stroke: #d6d6d6; stroke-width: 1px; vector-effect: non-scaling-stroke; }
.jade-mid { height: 18px; display: flex; align-items: center; justify-content: space-between; background: #e9e9e9; padding-right: 1px; margin-left: -8px; border: 1px solid #fff; }
.num { width: 18px; height: 14px; text-align: center; color: #aaa; border: 1px solid #ccc; }
.field { flex: 0 0 328px; height: 14px; background: #fff; border: 1px solid #888; border-width: 1px 0 0 1px; display: flex; justify-content: flex-end; color: #999; }
.drop { width: 11px; display: flex; align-items: center; justify-content: center; background: #eee; border: 1px solid #aaa; }
.code .caret, .raw .caret, .drop .caret { border-width: 3px 3px 0; }
.rail { width: 14px; display: flex; flex-direction: column; justify-content: flex-end; }
.rt { height: 14px; display: flex; align-items: center; justify-content: center; background: #ddd; border: 1px solid #fff; border-right-color: #777; border-bottom-color: #777; color: #000; }
.rt.half { height: 9px; overflow: hidden; color: #a66; }
.rt svg { width: 12px; height: 12px; }
.blue { color: #11c; }
.violet { color: #93a; }
.axis { height: 12px; background: #007480; color: #c9ecec; overflow: hidden; }
.ticks { width: 100%; height: 3px; fill: none; stroke: #cfeeee; }
.marks { display: grid; grid-template-columns: repeat(7, 1fr); margin: -1px -70px 0 74px; line-height: 10px; text-align: center; }
.jade-status { height: 12px; display: flex; align-items: center; text-align: center; margin-bottom: 1px; }
.jade-status span, .jade-status em { border-right: 1px solid #aaa; font-style: normal; line-height: 11px; }
.jade-status em { width: 21px; color: #888; }
.jade-status span:last-child { border: 0; margin-left: 4px; }
.w30 { width: 30px; text-align: left; }
.w54 { width: 54px; }
.mini-task { height: 26px; display: flex; gap: 4px; margin-left: -18px; background: linear-gradient(218deg, transparent 236px, #9bcdf7 242px 248px, transparent 256px), linear-gradient(90deg, #49a0d3, #2a87cb 33%, #1a60b4 80%, #1c5599 86%, #133d77 88%, #12386c); }
.slot { display: flex; align-items: center; justify-content: center; border: 1px solid transparent; }
.mini-task .slot { width: 38px; }
.mini-task .slot svg { width: 20px; height: 20px; }
.slot.open { border: 1px solid #2a567d; box-shadow: inset 0 0 0 1px #b7dbf0; background: linear-gradient(135deg, #d5ebf6, #72b4dc 50%, #8cc5e4); border-radius: 2px; }
.slot.now { background: linear-gradient(135deg, #ecf8fc, #a9d7ed 50%, #d6eff8); }
.mini-tray { margin-left: auto; display: flex; align-items: center; gap: 3px; padding-right: 13px; color: #fff; }
.mini-tray svg { width: 12px; height: 12px; }
.clock { font: 8px/12px "Noto Sans", sans-serif; text-align: center; margin-left: 6px; }
.cursor { position: absolute; left: 194px; top: 83px; width: 9px; height: 14px; }
.hexbird { position: absolute; right: 36px; top: 126px; width: 34px; height: 38px; }
.time-tip { position: absolute; left: 71px; bottom: 3px; width: 56px; height: 20px; font: 13px/19px "Noto Sans", sans-serif; text-align: center; background: #222; color: #fff; }
.time-tip::after { content: ""; position: absolute; left: 23px; top: 20px; border: 4px solid transparent; border-top-color: #222; }
.seekbar { height: 20px; display: flex; align-items: center; background: #1f1f1f; color: #aaa; padding-right: 2px; }
.seekbar button { width: 24px; }
.seekbar button:last-child { width: 22px; }
.seekbar svg { width: 14px; height: 12px; fill: #fff; }
.total { margin: 0 6px 0 5px; }
input[type=range] { appearance: none; margin: 0; height: 16px; background: linear-gradient(#444, #444) center / 100% 3px no-repeat; }
.seek { flex: 1; min-width: 0; overflow: hidden; }
.seek::-webkit-slider-runnable-track { background: linear-gradient(90deg, #2b97ec 7%, transparent 7%) center / 100% 3px no-repeat; }
.seek::-webkit-slider-thumb { appearance: none; width: 16px; height: 16px; border-radius: 8px; background: #fff; }
.side { display: flex; flex-direction: column; color: #fff; background: #27282d; grid-row: 2; grid-column: 2; min-height: 0; }
.tabs { display: grid; grid-template-columns: 1fr 1fr; height: 41px; background: #292b30; }
.tabs button { font-size: 15px; font-weight: 700; padding-top: 2px; border-bottom: 1px solid #34363b; }
.tabs .on { color: #1e96ef; border-color: #1e96ef; }
.searchwrap { height: 66px; padding: 14px; border-bottom: 1px solid #000; }
.search { height: 34px; display: flex; align-items: center; padding: 0 6px 0 13px; background: #1d1d20; border: 1px solid #36383d; border-radius: 3px; }
.search input { flex: 1; min-width: 0; background: none; border: 0; padding: 0; font: 300 14px "Noto Sans CJK SC", sans-serif; }
.search input::placeholder { color: #a0a0a0; opacity: 1; }
.search svg { width: 19px; height: 19px; fill: none; stroke: #999; stroke-width: 1px; }
.shelf { flex: 1; display: flex; flex-direction: column; justify-content: flex-end; padding: 0 3px 38px; }
.panel { height: 58%; background: linear-gradient(180deg, #36373f, #2d2c32 50%, #1d1c20); border-radius: 3px; }
.slogan { height: 20px; line-height: 20px; text-align: center; font-size: 13px; background: #363941; }
.controls { grid-column: 1 / 3; display: grid; grid-template-columns: 11fr auto 13fr; align-items: center; border-top: 1px solid #70727a; background: linear-gradient(90deg, #363941, #3c3f47 12%, #484a52 27%, #5b5c65 41%, #5b5c65 50%, #484a52 63%, #363941 78%); color: #fff; }
.volume { display: flex; align-items: center; gap: 8px; }
.volume svg { width: 14px; height: 20px; fill: none; stroke: #fff; stroke-width: 1px; }
.volume input { width: 56px; background: linear-gradient(90deg, #2b97ec 42%, #3a3c44 42%) center / 100% 3px no-repeat; }
.volume input::-webkit-slider-thumb { appearance: none; width: 1px; height: 1px; }
.transport { display: flex; align-items: center; }
.transport button { width: 35px; height: 46px; }
.transport svg { width: 20px; height: 20px; fill: none; stroke: #fff; stroke-width: 1px; }
.transport svg .f { fill: #fff; }
.transport .faint svg { stroke: #92949a; }
.dan { color: #92949a; font-size: 14px; }
.transport .pause { width: 46px; margin: 0 7px; border-radius: 50%; background: #089cff; box-shadow: 0 1px 4px #078bea; }
.transport .pause svg { stroke-width: 3px; stroke-linecap: round; }
.transport .clarity { width: 46px; height: 19px; margin-left: 11px; border-radius: 10px; background: #3f4148; color: #a1a2a7; }
.extras { display: flex; justify-content: flex-end; gap: 10px; padding-right: 20px; }
.vip, .pair { height: 28px; border: 1px solid #2c2e34; border-radius: 2px; }
.vip { width: 72px; color: #d8b38c; }
.pair { width: 110px; display: grid; grid-template-columns: 1fr 1fr; }
.pair .blue { color: #247cba; border-right: 1px solid #2c2e34; }
.box { position: relative; }
.box b { position: absolute; right: 0; top: 0; width: 22px; line-height: 15px; background: #f5380d; border-radius: 8px; }

/* details pane */
.details { position: relative; height: 53px; display: grid; grid-template-columns: 233px 32px 137px 56px 137px 56px 137px 56px 1fr; grid-auto-rows: 18px; padding-top: 5px; background: #f0f4fb; border-top: 1px solid #ccd9e8; color: #5a6b85; white-space: nowrap; }
.details b { font-weight: 400; color: #1e395b; }
.name { text-align: right; padding-right: 4px; color: #000; font-size: 13px; font-weight: 400; }
.r { text-align: right; padding-right: 5px; }
.stars { display: flex; align-items: center; gap: 3px; }
.stars svg { width: 14px; height: 14px; }
.ime { position: absolute; right: 169px; bottom: 0; height: 26px; display: flex; align-items: center; gap: 8px; padding: 0 5px 0 9px; background: #fff; border: 1px solid #a9c3dc; color: #0a72d8; }
.ime svg { width: 16px; height: 16px; fill: currentColor; }
.ime span { width: 16px; font-size: 15px; font-weight: 700; }
.ime .logo { width: 32px; height: 31px; margin: -6px -3px 0 -36px; }
.ime .grey { color: #c4c4c6; }

/* taskbar */
.taskbar { height: 40px; display: flex; gap: 5px; border-top: 1px solid #1a3450; background: linear-gradient(218deg, transparent 284px, #8fc6f2 296px 302px, transparent 316px), linear-gradient(90deg, #50a3d3, #419bd0 33%, #2a7dc4 62%, #1f65b1 78%, #1c5ba3 88%, #15457f 90%, #133e73); }
.orb { width: 19px; height: 32px; margin-top: 4px; }
.taskbar .slot { width: 57px; }
.taskbar .slot svg { width: 32px; height: 32px; }
.taskbar .stack { box-shadow: inset 0 0 0 1px #b7dbf0, 3px 0 0 #7ab5d9; }
.tray { margin-left: auto; display: flex; align-items: center; gap: 7px; padding-right: 1px; }
.tray svg { width: 16px; height: 16px; }
```
FILE: plot.js
```js
// Diffraction peaks: [x position, height, half width]
const peaks = [
  [79.5, 13, 1.5], [84.5, 46, 1], [115.5, 209, 1.1], [116, 45, 2.5], [180, 2, 2], [186, 2, 2], [206.5, 4, 2],
  [245.5, 75, 1], [247.5, 34, 1], [261.5, 88, 1.2], [263, 48, 1], [272, 3, 4], [290, 33, 1], [292, 16, 1],
  [310, 3, 2], [314, 12, 1.2], [348.5, 43, 1.2], [350, 22, 1], [384, 75, 1.1], [385.5, 37, 1], [395.5, 14, 1.1],
  [397.5, 6, 1], [409, 2, 2], [424, 2, 4], [463, 3, 2], [539, 30, 1], [541, 15, 1], [568.5, 103, 1.2],
  [570.5, 56, 1.1], [607.5, 30, 1], [610, 15, 1], [622, 56, 1.1], [624.5, 28, 1], [662, 1, 4], [686, 4, 2],
  [710.5, 15, 1.2], [713.5, 7, 1.2], [732, 15, 1.2], [735.5, 7, 1.2], [774.5, 23, 1.2], [777, 13, 1],
  [786.5, 4, 7], [802.5, 42, 1.1], [805.5, 19, 1], [816, 31, 1.2], [819, 16, 1.1], [829.5, 17, 1.1],
  [832.5, 8, 1.1], [874, 1, 3], [942, 3, 1.5], [948, 10, 1.5], [953, 5, 2.5], [1014.5, 3, 3], [1040.5, 7, 1.5],
  [1044, 3, 1.5], [1074, 4, 2.5], [1110, 2, 3], [1152, 4, 1.5], [1161.5, 11, 1.3], [1166.5, 5, 1.3]
];

document.querySelectorAll('.trace').forEach(path => {
  const base = Number(path.dataset.base);
  const scale = Number(path.dataset.scale);
  let seed = 7;
  const points = [];
  for (let x = 0; x <= 1168; x += 0.5) {
    seed = (seed * 16807) % 2147483647;
    const noise = x % 1 ? 0 : (seed / 2147483647 - 0.5) * 2.2;
    let h = 0;
    for (const [c, top, w] of peaks) {
      h = Math.max(h, top / Math.pow(1 + Math.pow((x - c) / w, 2) * 0.7, 1.4));
    }
    points.push(x + ' ' + (base + x * 0.0015 - h * scale + noise).toFixed(1));
  }
  path.setAttribute('d', 'M' + points.join('L'));
});

// A tick every 2 degrees; 30 degrees is at x = 158
let ticks = '';
for (let i = -4; i <= 30; i++) {
  ticks += 'M' + Math.round(158 + i * 33.73) + ' 0v3';
}
document.querySelector('.ticks path').setAttribute('d', ticks);
```
